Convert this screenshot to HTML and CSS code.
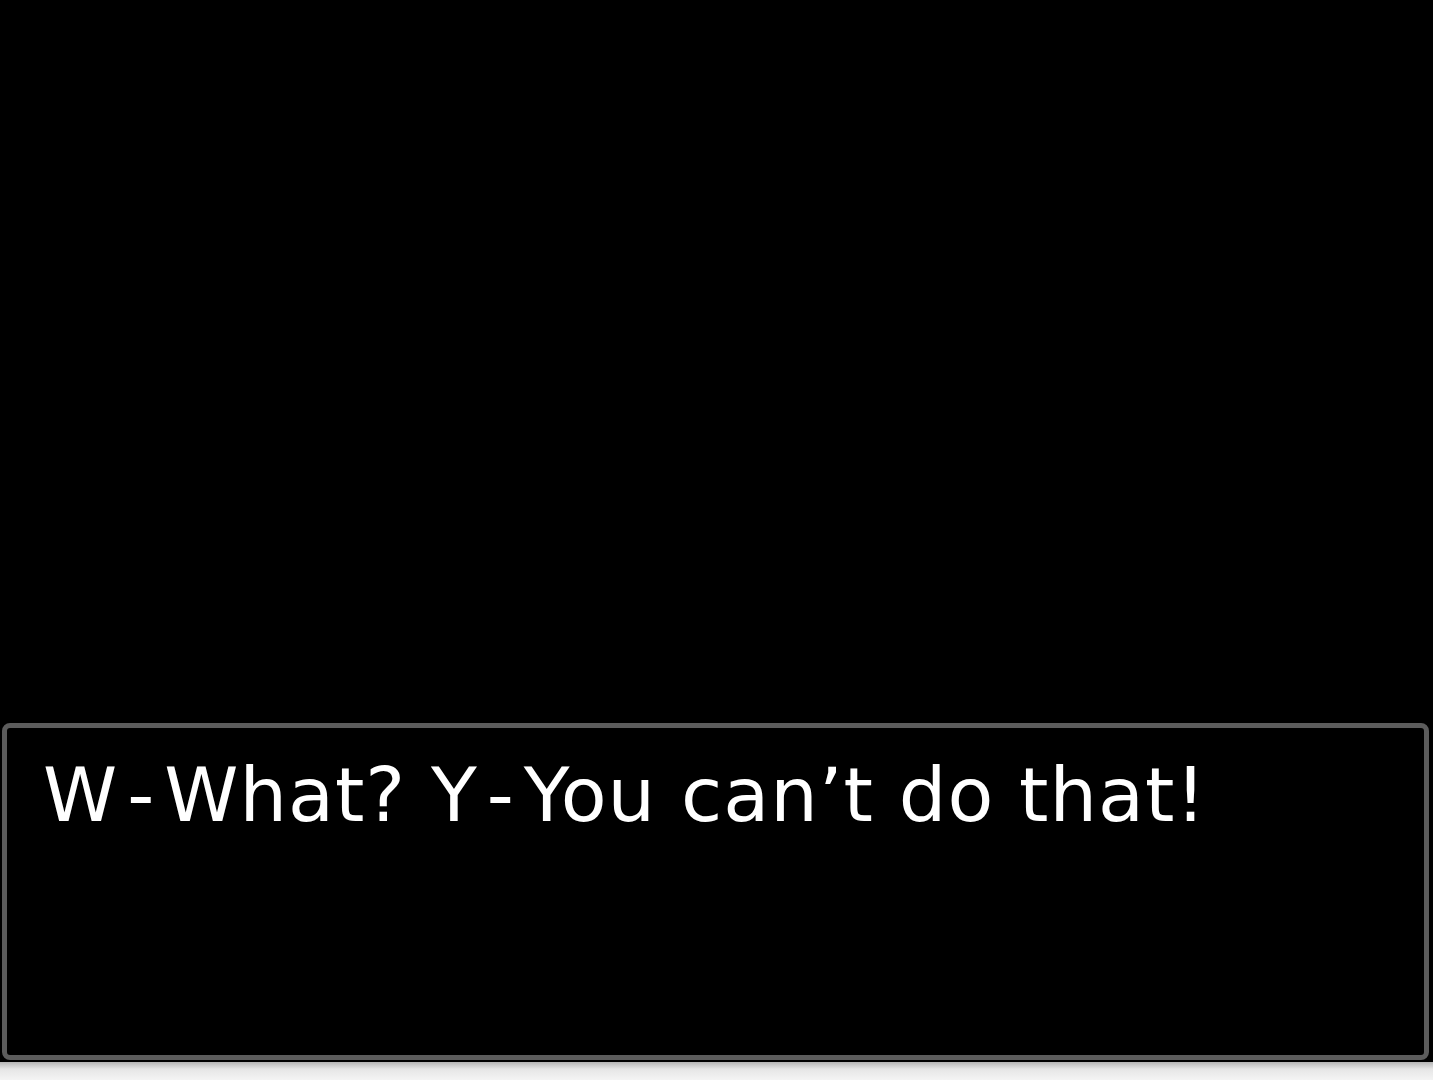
FILE: index.html
```html
<!DOCTYPE html>
<html lang="en">
<head>
    <link rel="stylesheet" href="styles.css">
    <title>Dialogue</title>
</head>
<body>
    <div class="screen">
        <!--EMPTY SCENE ABOVE THE TEXT BOX-->
        <div class="stage"></div>

        <!--TEXT BOX-->
        <div class="dialog">
            <p class="dialog-text">W<span class="dash">-</span>What? Y<span class="dash">-</span>You can’t do that!</p>
        </div>

        <div class="bottom-strip"></div>
    </div>
</body>
</html>
```

FILE: styles.css
```css
body{
    margin: 0;
    background-color: #000;
}
.screen{
    height: 1080px;
    display: flex;
    flex-direction: column;
}
.stage{
    flex: 1;
}
.dialog{
    height: 337px;
    box-sizing: border-box;
    margin: 0 4px 2px 2px;
    border: 5px solid #5c5c5c;
    border-radius: 8px;
    background-color: #000;
    padding: 30px 36px;
}
.dialog-text{
    margin: 0;
    color: #fff;
    font-family: "DejaVu Sans", sans-serif;
    font-size: 75px;
    line-height: 75px;
    letter-spacing: 1px;
    white-space: nowrap;
}
.dash{
    margin: 0 9px;
}
.bottom-strip{
    height: 18px;
    background: linear-gradient(#b5b5b5, #e6e6e6 40%, #f4f4f4);
}
```
